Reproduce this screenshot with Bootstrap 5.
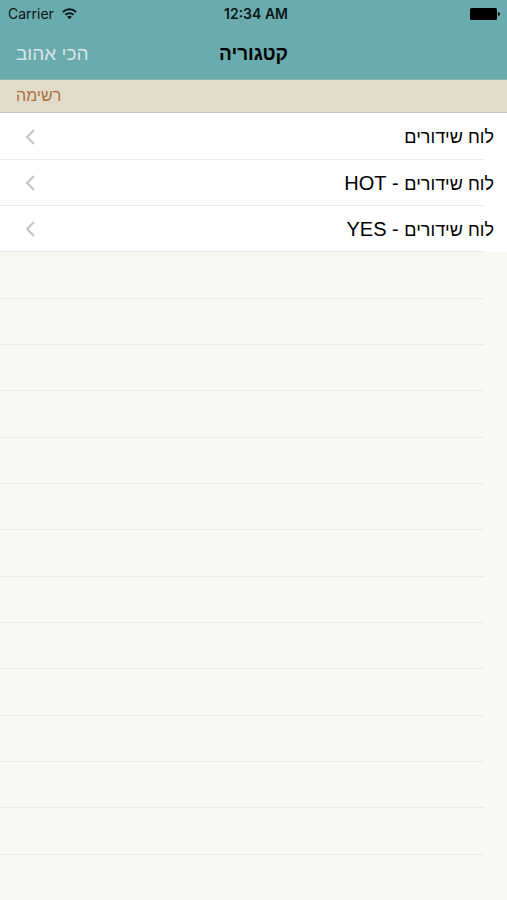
<!DOCTYPE html>
<html lang="he" dir="rtl">
<head>
<meta charset="utf-8">
<meta name="viewport" content="width=device-width, initial-scale=1">
<title>קטגוריה</title>
<link href="https://cdn.jsdelivr.net/npm/bootstrap@5.3.0/dist/css/bootstrap.min.css" rel="stylesheet">
<style>
body { background: #f9f8f3; color: #000; font-family: "Liberation Sans", sans-serif; }
.top-area { background: #6aabad; border-bottom: 1px solid #8fb5ae; }
.status-row { font: 400 14px/28px Inter, sans-serif; color: #0a1618; padding: 0 7px 0 8px; }
.status-row .clock { font-weight: 600; padding-left: 4px; }
.side { flex: 1 1 0; }
.title-row { height: 51px; padding: 0 16px; }
.title-row h1 { font-size: 19px; line-height: 24px; font-weight: 700; }
.title-row button { font-size: 19px; line-height: 24px; color: #d9e3ea; }
.section-head { background: #e0dcc9; border-bottom: 1px solid #c9c7bd; padding: 0 16px; font-size: 16px; line-height: 32px; font-weight: 400; color: #ad6e3f; text-align: left; }
.rows > li { height: 46px; display: flex; flex-direction: column; }
.rows > li:nth-child(3n+1) { height: 47px; }
.rows > li.filled { background: #fff; }
.rows > li::after { content: ""; height: 1px; flex: none; margin-top: auto; margin-right: 23px; background: #ebebe6; }
.rows a { color: #000; padding: 1px 13px 0 25px; font-size: 18px; line-height: 24px; }
.latin { font-size: 20px; }
</style>
</head>
<body>
<div>
  <header class="top-area">
    <div class="status-row d-flex align-items-center" dir="ltr">
      <div class="side d-flex align-items-center gap-2">
        <span>Carrier</span>
        <svg width="15" height="12" viewBox="0 0 17 13" fill="none" stroke="#0a1618" stroke-width="2.200" aria-hidden="true"><path d="M1 4.200C5.400.2 11.600.2 16 4.200M3.800 7.400C6.500 4.900 10.500 4.900 13.200 7.400"/><path d="M8.500 12.500 5.800 9.600q2.700-2.200 5.400 0z" fill="#0a1618" stroke="none"/></svg>
      </div>
      <span class="clock">12:34 AM</span>
      <div class="side d-flex justify-content-end">
        <svg width="30" height="12" viewBox="0 0 30 12" aria-label="סוללה" role="img"><rect width="27" height="12" rx="1.500"/><path d="M28 4q2 .5 2 2t-2 2z"/></svg>
      </div>
    </div>
    <div class="title-row d-flex align-items-center">
      <div class="side"></div>
      <h1 class="m-0">קטגוריה</h1>
      <div class="side d-flex justify-content-end"><button type="button" class="btn border-0 p-0">הכי אהוב</button></div>
    </div>
  </header>
  <main>
    <h2 class="section-head m-0">רשימה</h2>
    <ul class="rows list-unstyled m-0 p-0">
      <li class="filled"><a href="#" class="d-flex flex-fill align-items-center justify-content-between text-decoration-none"><span>לוח שידורים</span><svg width="10" height="16" viewBox="0 0 10 16" fill="none" stroke="#c4c4c8" stroke-width="2" aria-hidden="true"><path d="M9 1 2 8l7 7"/></svg></a></li>
      <li class="filled"><a href="#" class="d-flex flex-fill align-items-center justify-content-between text-decoration-none"><span>לוח שידורים<span class="latin"> - HOT</span></span><svg width="10" height="16" viewBox="0 0 10 16" fill="none" stroke="#c4c4c8" stroke-width="2" aria-hidden="true"><path d="M9 1 2 8l7 7"/></svg></a></li>
      <li class="filled"><a href="#" class="d-flex flex-fill align-items-center justify-content-between text-decoration-none"><span>לוח שידורים<span class="latin"> - YES</span></span><svg width="10" height="16" viewBox="0 0 10 16" fill="none" stroke="#c4c4c8" stroke-width="2" aria-hidden="true"><path d="M9 1 2 8l7 7"/></svg></a></li>
      <li></li><li></li><li></li><li></li><li></li><li></li><li></li>
      <li></li><li></li><li></li><li></li><li></li><li></li>
    </ul>
  </main>
</div>
<script src="https://cdn.jsdelivr.net/npm/bootstrap@5.3.0/dist/js/bootstrap.bundle.min.js"></script>
</body>
</html>
